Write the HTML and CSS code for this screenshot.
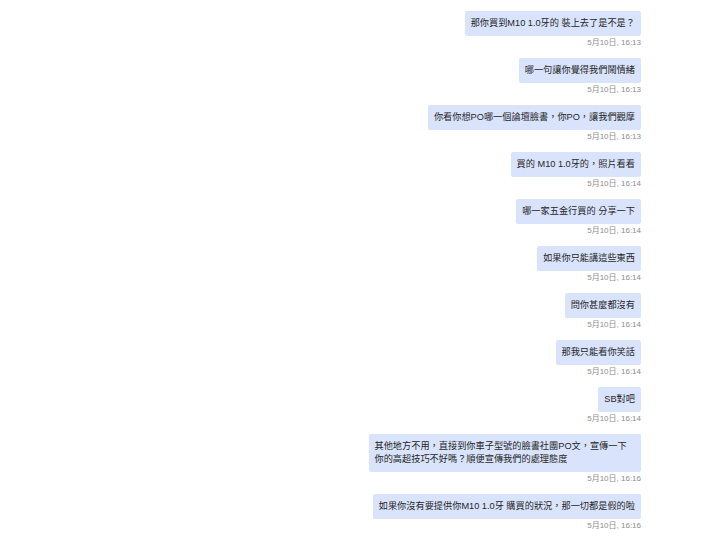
FILE: index.html
```html
<!DOCTYPE html>
<html lang="zh-Hant">
<head>
    <meta charset="UTF-8">
    <meta name="viewport" content="width=device-width, initial-scale=1.0">
    <title>對話紀錄</title>
    <link rel="stylesheet" href="styles.css">
</head>
<body>
    <div class="chat">
        <div class="msg">
            <div class="bubble">那你買到M10 1.0牙的 裝上去了是不是？</div>
            <div class="time">5月10日, 16:13</div>
        </div>
        <div class="msg">
            <div class="bubble">哪一句讓你覺得我們鬧情緒</div>
            <div class="time">5月10日, 16:13</div>
        </div>
        <div class="msg">
            <div class="bubble">你看你想PO哪一個論壇臉書，你PO，讓我們觀摩</div>
            <div class="time">5月10日, 16:13</div>
        </div>
        <div class="msg">
            <div class="bubble">買的 M10 1.0牙的，照片看看</div>
            <div class="time">5月10日, 16:14</div>
        </div>
        <div class="msg">
            <div class="bubble">哪一家五金行買的 分享一下</div>
            <div class="time">5月10日, 16:14</div>
        </div>
        <div class="msg">
            <div class="bubble">如果你只能講這些東西</div>
            <div class="time">5月10日, 16:14</div>
        </div>
        <div class="msg">
            <div class="bubble">問你甚麼都沒有</div>
            <div class="time">5月10日, 16:14</div>
        </div>
        <div class="msg">
            <div class="bubble">那我只能看你笑話</div>
            <div class="time">5月10日, 16:14</div>
        </div>
        <div class="msg">
            <div class="bubble">SB對吧</div>
            <div class="time">5月10日, 16:14</div>
        </div>
        <div class="msg">
            <div class="bubble">其他地方不用，直接到你車子型號的臉書社團PO文，宣傳一下你的高超技巧不好嗎？順便宣傳我們的處理態度</div>
            <div class="time">5月10日, 16:16</div>
        </div>
        <div class="msg">
            <div class="bubble">如果你沒有要提供你M10 1.0牙 購買的狀況，那一切都是假的啦</div>
            <div class="time">5月10日, 16:16</div>
        </div>
    </div>
</body>
</html>
```

FILE: styles.css
```css
body {
    margin: 0;
    background-color: #ffffff;
    font-family: "Liberation Sans", Arial, "Noto Sans CJK TC", sans-serif;
}
.chat {
    display: flex;
    flex-direction: column;
    align-items: flex-end;
    padding: 11px 79px 0 0;
}
.msg {
    display: flex;
    flex-direction: column;
    align-items: flex-end;
    margin-bottom: 10px;
}
.bubble {
    background-color: #d9e4fc;
    color: #262626;
    font-size: 9.2px;
    line-height: 12.5px;
    padding: 6.25px 6px;
    max-width: 260.5px;
    border-radius: 2px;
}
.time {
    color: #8c8c8c;
    font-size: 8px;
    line-height: 11px;
    margin-top: 1px;
}
```
